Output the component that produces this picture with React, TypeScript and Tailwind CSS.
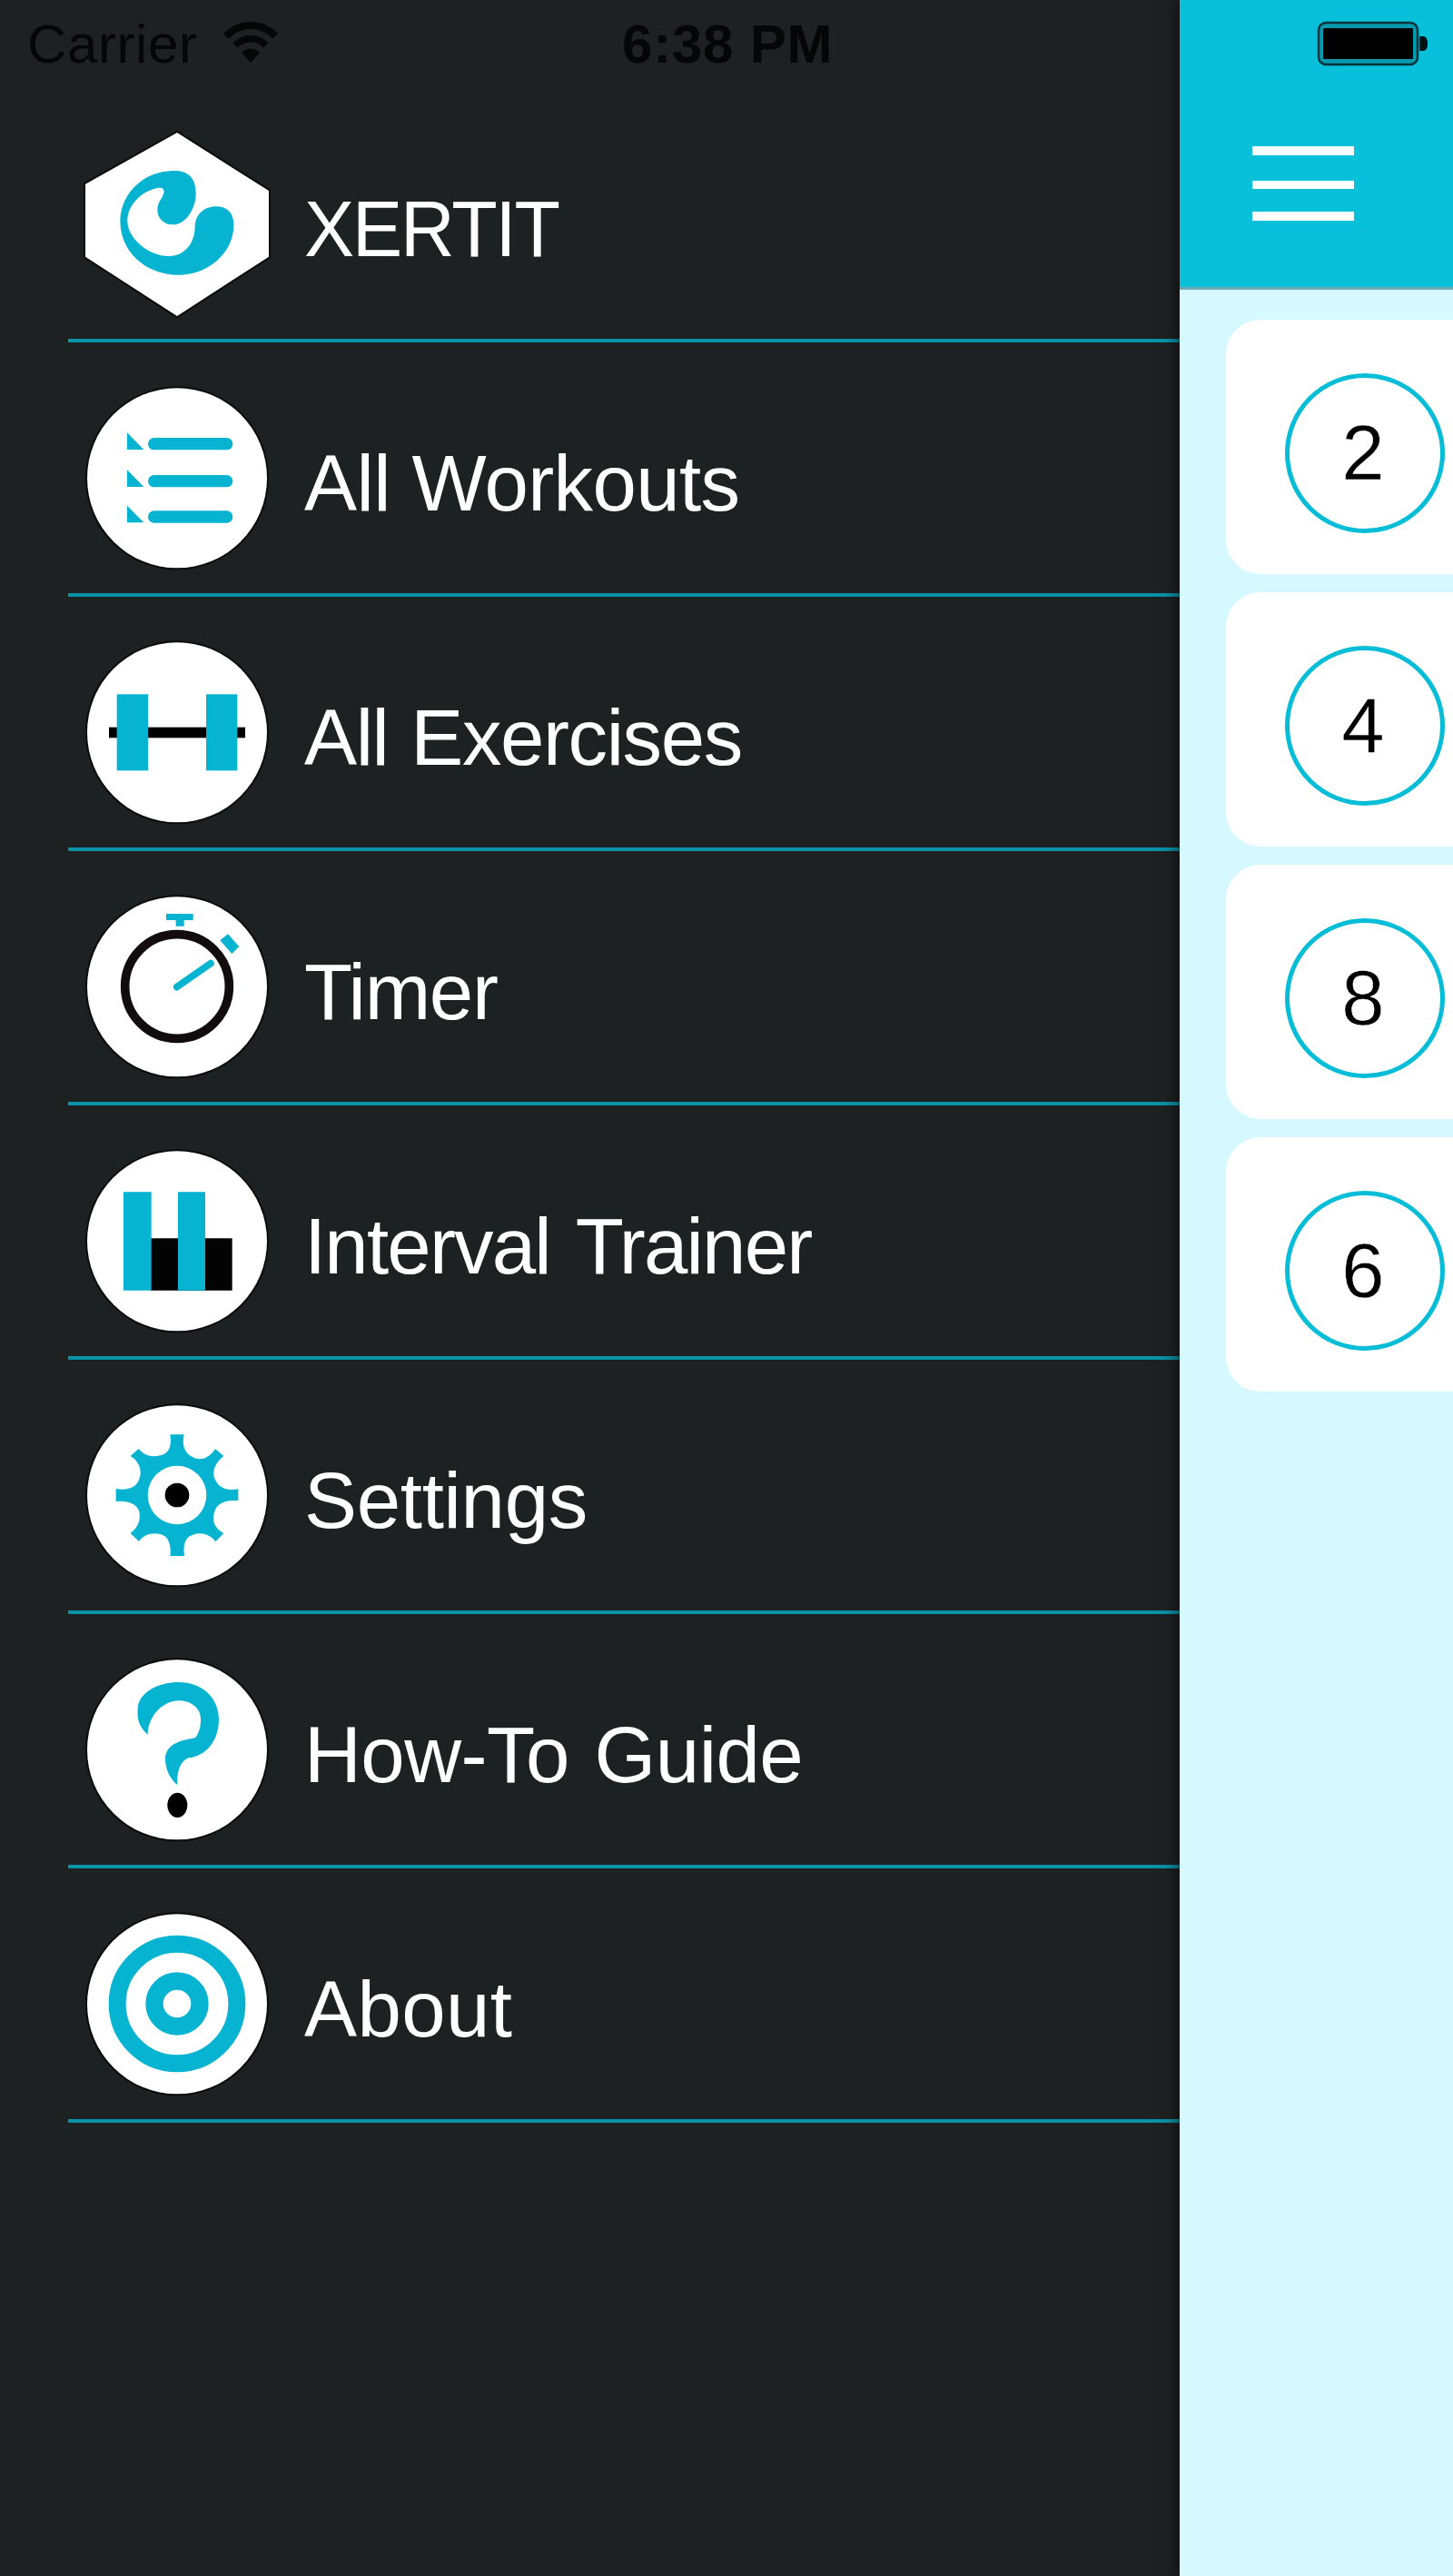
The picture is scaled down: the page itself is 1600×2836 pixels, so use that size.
import type { ReactNode } from "react";

const CYAN = "#06b4d2";

function Badge({ children }: { children: ReactNode }) {
  return (
    <svg viewBox="0 0 690 690" className="mt-[33px] size-[230px] shrink-0" aria-hidden="true">
      {children}
    </svg>
  );
}

function Disc() {
  return <circle cx="345" cy="349" r="297" fill="#fff" stroke="#0a0c0c" strokeWidth="12" paintOrder="stroke" />;
}

function LogoIcon() {
  return (
    <Badge>
      <path d="M345 48 L648 240 V458 L345 654 L42 458 V218 Z" fill="#fff" stroke="#0a0c0c" strokeWidth="12" paintOrder="stroke" />
      <path
        d="M330 174 C380 172 408 196 407 252 C406 302 372 352 332 352 C300 352 280 330 280 302 C281 275 300 262 302 244 C302 232 293 229 280 231 C226 242 181 288 181 340 C181 398 252 456 318 456 C366 456 402 418 404 362 C404 320 432 292 475 292 C514 293 534 316 532 360 C528 444 450 518 350 518 C240 518 157 440 157 340 C159 246 236 176 330 174 Z"
        fill={CYAN}
      />
    </Badge>
  );
}

function ListIcon() {
  return (
    <Badge>
      <Disc />
      {[236, 359, 477].map((y) => (
        <g key={y} fill={CYAN}>
          <rect x="249" y={y - 20} width="280" height="40" rx="20" />
          <path d={`M180 ${y - 37} L235 ${y + 19} H180 Z`} />
        </g>
      ))}
    </Badge>
  );
}

function DumbbellIcon() {
  return (
    <Badge>
      <Disc />
      <rect x="120" y="332" width="450" height="35" fill="#000" />
      <rect x="146" y="223" width="103" height="252" fill={CYAN} />
      <rect x="441" y="223" width="103" height="252" fill={CYAN} />
    </Badge>
  );
}

function StopwatchIcon() {
  return (
    <Badge>
      <Disc />
      <circle cx="345" cy="348" r="172" fill="none" stroke="#130c0f" strokeWidth="29" />
      <path d="M309 108 H398 V129 H368 V149 H341 V129 H309 Z" fill={CYAN} />
      <path d="M513 175 L550 216 L526 240 L487 196 Z" fill={CYAN} />
      <path d="M344 350 L456 272" stroke={CYAN} strokeWidth="23" strokeLinecap="round" />
    </Badge>
  );
}

function IntervalIcon() {
  return (
    <Badge>
      <Disc />
      <path d="M258 340 H527 V512 H258 Z" fill="#030303" />
      <path d="M168 187 H260 V512 H168 Z M348 187 H438 V512 H348 Z" fill={CYAN} />
    </Badge>
  );
}

function GearIcon() {
  return (
    <Badge>
      <Disc />
      <path
        d="M322 148 H368 C358 190 375 223 418 229 C440 230 460 213 471 195 L499 219 C464 247 459 280 474 303 C489 329 519 334 547 328 V367 C511 363 479 371 469 402 C458 432 468 456 499 474 L472 502 C453 476 423 470 397 479 C371 487 364 514 369 549 H322 C327 513 316 483 290 477 C261 470 235 478 219 501 L191 474 C219 453 226 425 219 400 C210 375 180 365 143 369 V327 C179 333 207 325 218 300 C232 269 221 237 191 219 L218 195 C238 219 263 224 290 217 C319 210 328 184 322 148 Z"
        fill={CYAN}
      />
      <circle cx="345" cy="348" r="97" fill="#fff" />
      <circle cx="345" cy="348" r="40" fill="#000" />
    </Badge>
  );
}

function HelpIcon() {
  return (
    <Badge>
      <Disc />
      <path
        d="M248 299 C220 272 212 250 215 212 C219 158 285 126 350 126 C429 126 482 178 483 248 C483 318 441 371 382 376 C352 390 344 426 346 466 C318 441 305 408 306 376 C309 339 340 320 404 310 C418 296 424 269 423 245 C421 209 389 187 350 187 C300 188 250 234 248 299 Z"
        fill={CYAN}
      />
      <ellipse cx="346" cy="532" rx="33" ry="41" fill="#000" />
    </Badge>
  );
}

function TargetIcon() {
  return (
    <Badge>
      <Disc />
      <circle cx="345" cy="348" r="197.5" fill="none" stroke={CYAN} strokeWidth="57" />
      <circle cx="345" cy="348" r="75" fill="none" stroke={CYAN} strokeWidth="58" />
    </Badge>
  );
}

const MENU = [
  { label: "XERTIT", icon: <LogoIcon />, spacing: "tracking-[-2.2px] origin-left scale-x-[0.95]" },
  { label: "All Workouts", icon: <ListIcon />, spacing: "tracking-[-0.6px]" },
  { label: "All Exercises", icon: <DumbbellIcon />, spacing: "tracking-[-1.4px] [word-spacing:2px]" },
  { label: "Timer", icon: <StopwatchIcon />, spacing: "tracking-[-1.3px]" },
  { label: "Interval Trainer", icon: <IntervalIcon />, spacing: "tracking-[-1.8px] [word-spacing:7px]" },
  { label: "Settings", icon: <GearIcon />, spacing: "tracking-[-0.3px]" },
  { label: "How-To Guide", icon: <HelpIcon />, spacing: "tracking-[-0.5px] [word-spacing:4px]" },
  { label: "About", icon: <TargetIcon />, spacing: "tracking-[0.4px]" },
];

function StatusBar() {
  return (
    <header className="absolute inset-x-0 top-0 z-10 flex h-24 items-start text-[60px] leading-none text-[#050606]">
      <span className="ml-[30px] mt-[19px] w-[216px] whitespace-nowrap tracking-[0.6px]">Carrier</span>
      <svg viewBox="0 0 60 46" className="mt-[23px] h-[46px] w-[60px]" aria-hidden="true">
        <path d="M3 17 C18 1 42 1 57 17" fill="none" stroke="currentColor" strokeWidth="8" />
        <path d="M13 27 C23 17 37 17 47 27" fill="none" stroke="currentColor" strokeWidth="7.5" />
        <path d="M20 35 C26 29 34 29 40 35 L30 46 Z" fill="currentColor" />
      </svg>
      <span className="ml-[379px] mt-[19px] whitespace-nowrap font-bold tracking-[0.8px]">6:38 PM</span>
      <svg viewBox="0 0 124 50" className="ml-auto mr-[26px] mt-[23px] h-[50px] w-[124px]" aria-hidden="true">
        <rect x="2" y="2" width="109" height="46" rx="8" fill="#0799ad" stroke="#02333a" strokeWidth="2.5" />
        <rect x="7" y="8" width="99" height="34" fill="#000" />
        <path d="M113 17 H117 Q122 17 122 25 Q122 33 117 33 H113 Z" fill="#021114" />
      </svg>
    </header>
  );
}

export default function App() {
  return (
    <div className="relative flex h-[2836px] w-[1600px] overflow-hidden bg-[#1e2122] font-['Liberation_Sans',Arial,sans-serif]">
      <StatusBar />
      <nav className="w-[1299px] shrink-0 pl-[75px] pt-[97px]">
        {MENU.map(({ label, icon, spacing }) => (
          <a key={label} className="flex h-[280px] items-start border-b-4 border-[#0a92a9]">
            <span className="ml-[5px]">{icon}</span>
            <span className={`ml-[25px] mt-[111px] whitespace-nowrap text-[87px] leading-none text-white ${spacing}`}>{label}</span>
          </a>
        ))}
      </nav>
      <main className="h-full w-[301px] shrink-0 bg-[#d6f8ff] shadow-[-2px_0_18px_rgba(0,0,0,0.65)]">
        <div className="h-[319px] border-b-[3px] border-[#6fa9b1] bg-[#08c0da] pl-20 pt-[161px]">
          <div className="flex h-[82px] w-28 flex-col">
            <span className="h-2.5 bg-white" />
            <span className="mt-7 h-[9px] bg-white" />
            <span className="mt-[25px] h-2.5 bg-white" />
          </div>
        </div>
        <div className="flex flex-col gap-5 pl-[51px] pt-[33px]">
          {[2, 4, 8, 6].map((count) => (
            <div key={count} className="h-[280px] rounded-l-[38px] bg-white pl-[65px] pt-[59px]">
              <div className="flex size-[176px] items-center justify-center rounded-full border-[5px] border-[#05bdd7] pb-0.5 pr-1 text-[85px] leading-none text-black [-webkit-text-stroke:0.5px_white]">
                {count}
              </div>
            </div>
          ))}
        </div>
      </main>
    </div>
  );
}
